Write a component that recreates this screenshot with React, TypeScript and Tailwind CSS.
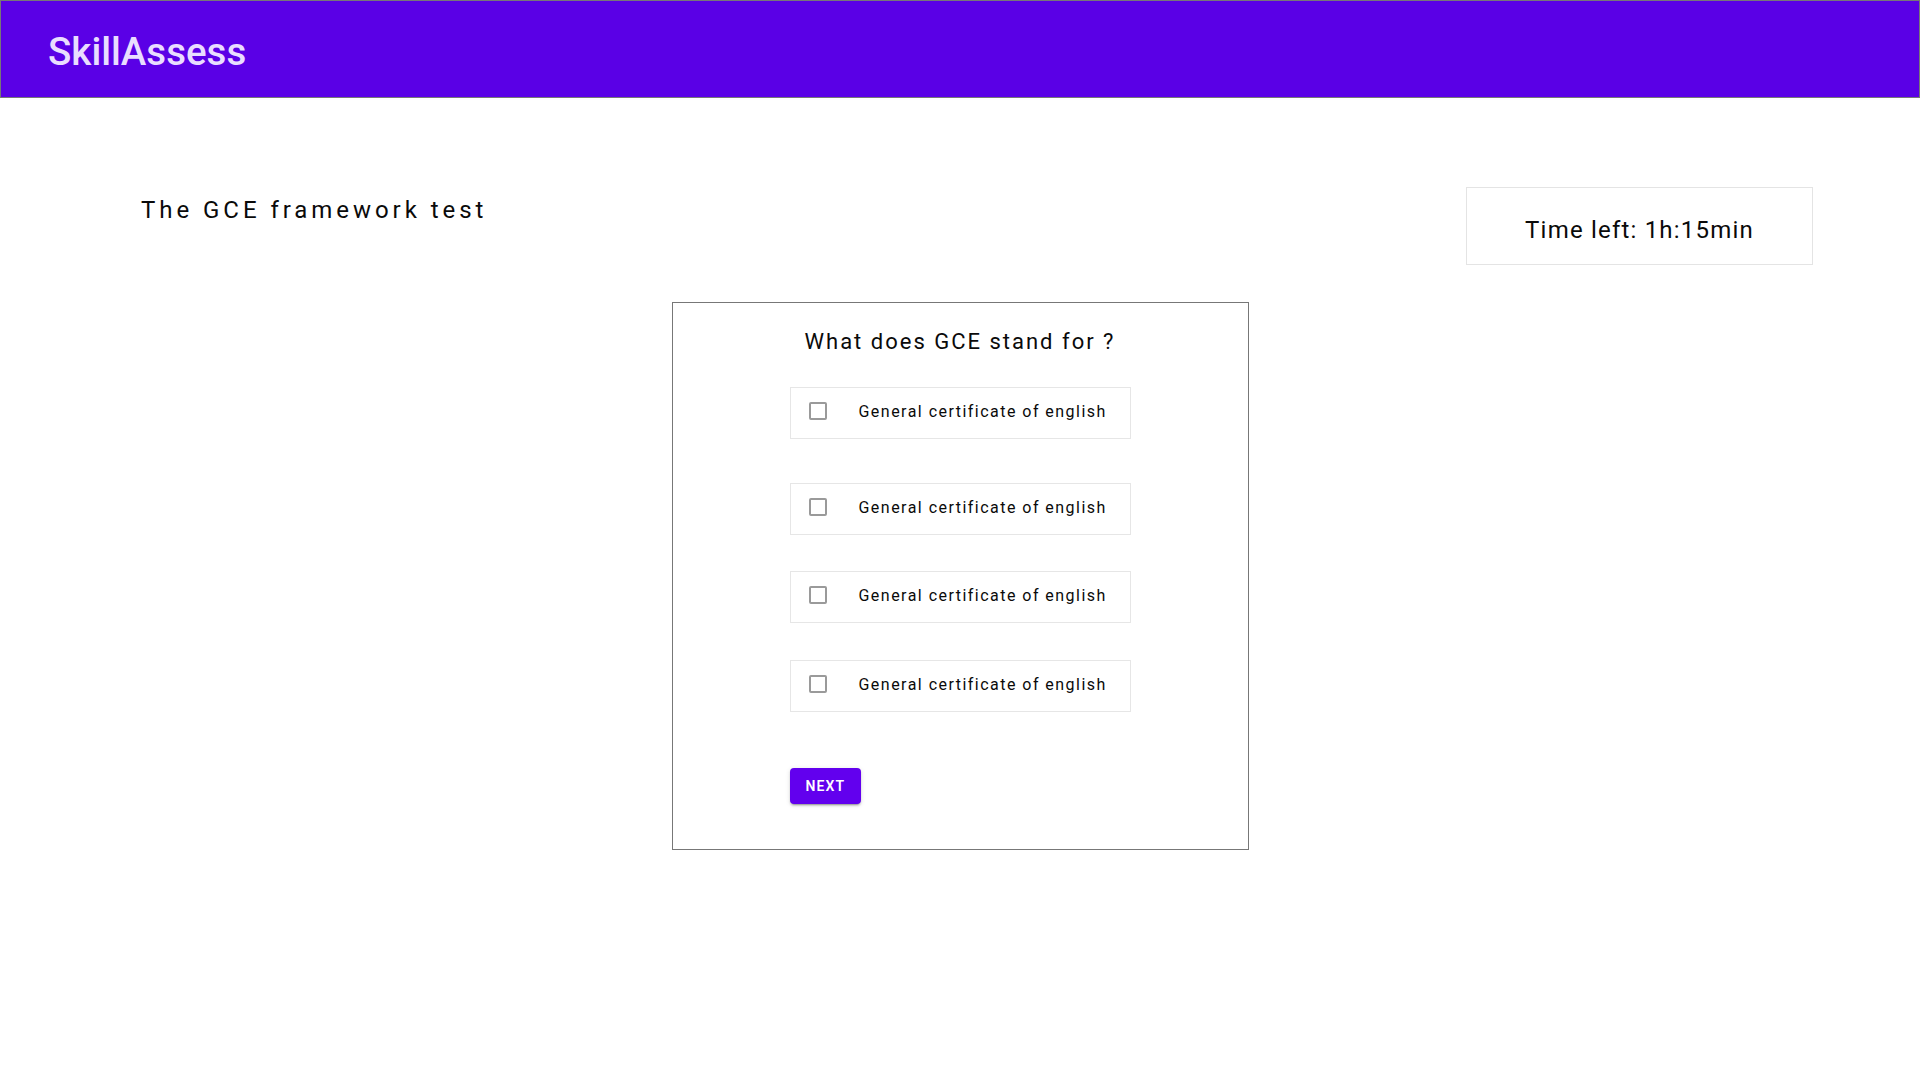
const options = [
  { id: 1, label: 'General certificate of english', mt: 'mt-[29px]' },
  { id: 2, label: 'General certificate of english', mt: 'mt-[44px]' },
  { id: 3, label: 'General certificate of english', mt: 'mt-[36px]' },
  { id: 4, label: 'General certificate of english', mt: 'mt-[37px]' },
]

export default function App() {
  return (
    <div className="min-h-screen bg-white font-['Roboto',sans-serif] text-[#0a0a0a]">
      {/* top bar */}
      <header className="h-[98px] border border-[#777] bg-[#5a00e6] px-[47px] flex items-center">
        <h1 className="text-[38.5px] font-medium leading-none text-[#e9ddff] pt-[6px]">SkillAssess</h1>
      </header>

      <main>
        <div className="flex items-start justify-between pl-[141px] pr-[107px] mt-[89px]">
          <h2 className="mt-[5px] text-[24px] leading-[36px] tracking-[3.95px]">The GCE framework test</h2>
          <div className="w-[347px] h-[78px] border border-[#e4e4e4] flex items-center justify-center pt-[8px]">
            <span className="text-[24px] leading-[36px] tracking-[1.2px]">Time left: 1h:15min</span>
          </div>
        </div>

        <div className="mx-auto mt-[37px] w-[577px] border border-[#777] pt-[22px] pb-[45px]">
          <h3 className="text-center text-[22px] leading-[33px] tracking-[2px]">What does GCE stand for ?</h3>

          <div className="mx-auto w-[341px]">
            {options.map((o) => (
              <label
                key={o.id}
                className={`${o.mt} h-[52px] border border-[#e6e6e6] flex items-center pl-[18px] pb-[2px]`}
              >
                <span className="w-[18px] h-[18px] rounded-[2px] border-2 border-[#9a9a9a] shrink-0 mb-[2px]" />
                <span className="ml-[32px] text-[16px] leading-[24px] tracking-[1.47px]">{o.label}</span>
              </label>
            ))}

            <button className="mt-[56px] h-9 px-4 rounded bg-[#6200ee] text-white text-[14px] font-semibold tracking-[1.1px] uppercase shadow-[0_3px_1px_-2px_rgba(0,0,0,0.2),0_2px_2px_0_rgba(0,0,0,0.14),0_1px_5px_0_rgba(0,0,0,0.12)]">
              Next
            </button>
          </div>
        </div>
      </main>
    </div>
  )
}
